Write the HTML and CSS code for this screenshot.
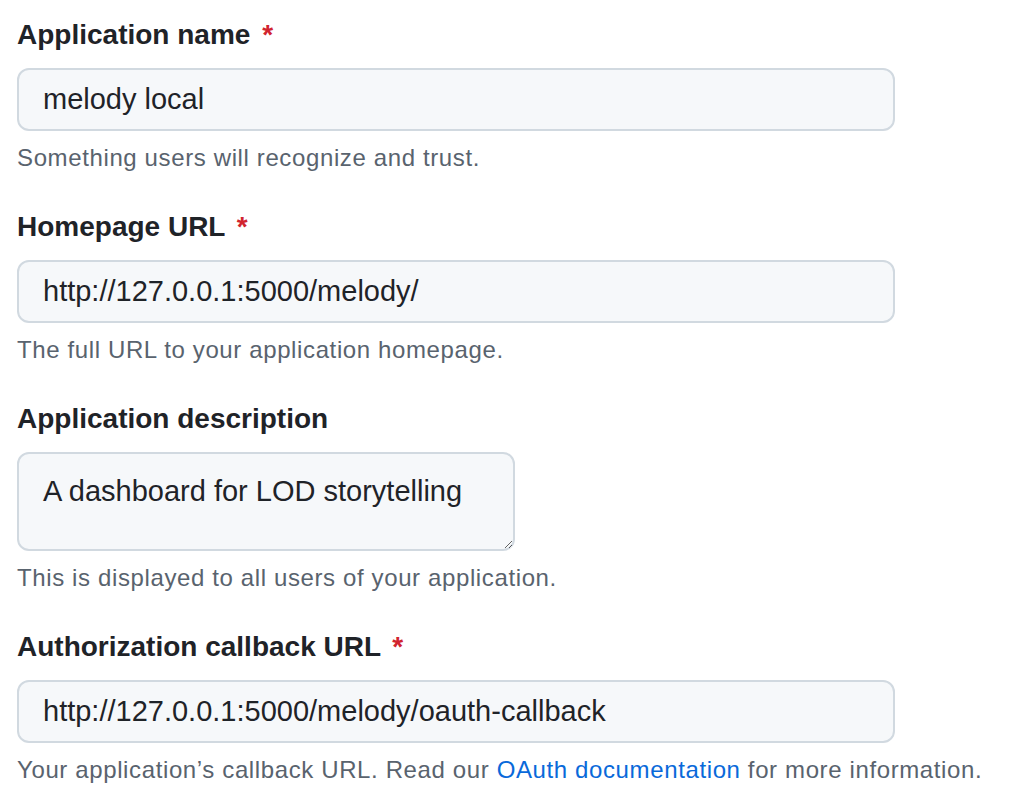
FILE: index.html
```html
<!DOCTYPE html>
<html lang="en">
<head>
<meta charset="utf-8">
<title>Register a new OAuth application</title>
<link rel="stylesheet" href="styles.css">
</head>
<body>
<form class="form">
  <div class="group">
    <label class="label" for="name">Application name <span class="req">*</span></label>
    <input class="field" id="name" type="text" value="melody local">
    <p class="note">Something users will recognize and trust.</p>
  </div>
  <div class="group">
    <label class="label" for="home">Homepage URL <span class="req">*</span></label>
    <input class="field" id="home" type="text" value="http://127.0.0.1:5000/melody/">
    <p class="note">The full URL to your application homepage.</p>
  </div>
  <div class="group">
    <label class="label" for="desc">Application description</label>
    <textarea class="field area" id="desc">A dashboard for LOD storytelling</textarea>
    <p class="note">This is displayed to all users of your application.</p>
  </div>
  <div class="group">
    <label class="label" for="cb">Authorization callback URL <span class="req">*</span></label>
    <input class="field" id="cb" type="text" value="http://127.0.0.1:5000/melody/oauth-callback">
    <p class="note">Your application’s callback URL. Read our <a class="link" href="#">OAuth documentation</a> for more information.</p>
  </div>
</form>
</body>
</html>
```
FILE: styles.css
```css
html, body {
  margin: 0;
  padding: 0;
  background: #ffffff;
}
body {
  font-family: "Liberation Sans", Arial, sans-serif;
  color: #1f2328;
}
.form {
  display: flex;
  flex-direction: column;
  gap: 30px;
  padding: 14px 0 0 17px;
}
.group {
  display: flex;
  flex-direction: column;
  align-items: flex-start;
}
.label {
  font-family: "Liberation Sans", Arial, sans-serif;
  font-weight: 700;
  font-size: 28px;
  line-height: 42px;
  margin-bottom: 12px;
  color: #1f2328;
}
.req {
  color: #d1242f;
  margin-left: 4px;
}
.field {
  box-sizing: border-box;
  width: 878px;
  height: 63px;
  margin: 0;
  padding: 0 24px;
  border: 2px solid #d1d9e0;
  border-radius: 12px;
  background: #f6f8fa;
  font-family: "Liberation Sans", Arial, sans-serif;
  font-size: 29px;
  color: #1f2328;
  outline: none;
}
.area {
  width: 498px;
  height: 99px;
  padding: 17px 24px;
  line-height: 40px;
  resize: vertical;
}
.note {
  margin: 9px 0 0;
  font-family: "Liberation Sans", Arial, sans-serif;
  font-size: 24px;
  line-height: 36px;
  letter-spacing: 0.62px;
  color: #59636e;
}
.link {
  color: #0969da;
  text-decoration: none;
}
```
